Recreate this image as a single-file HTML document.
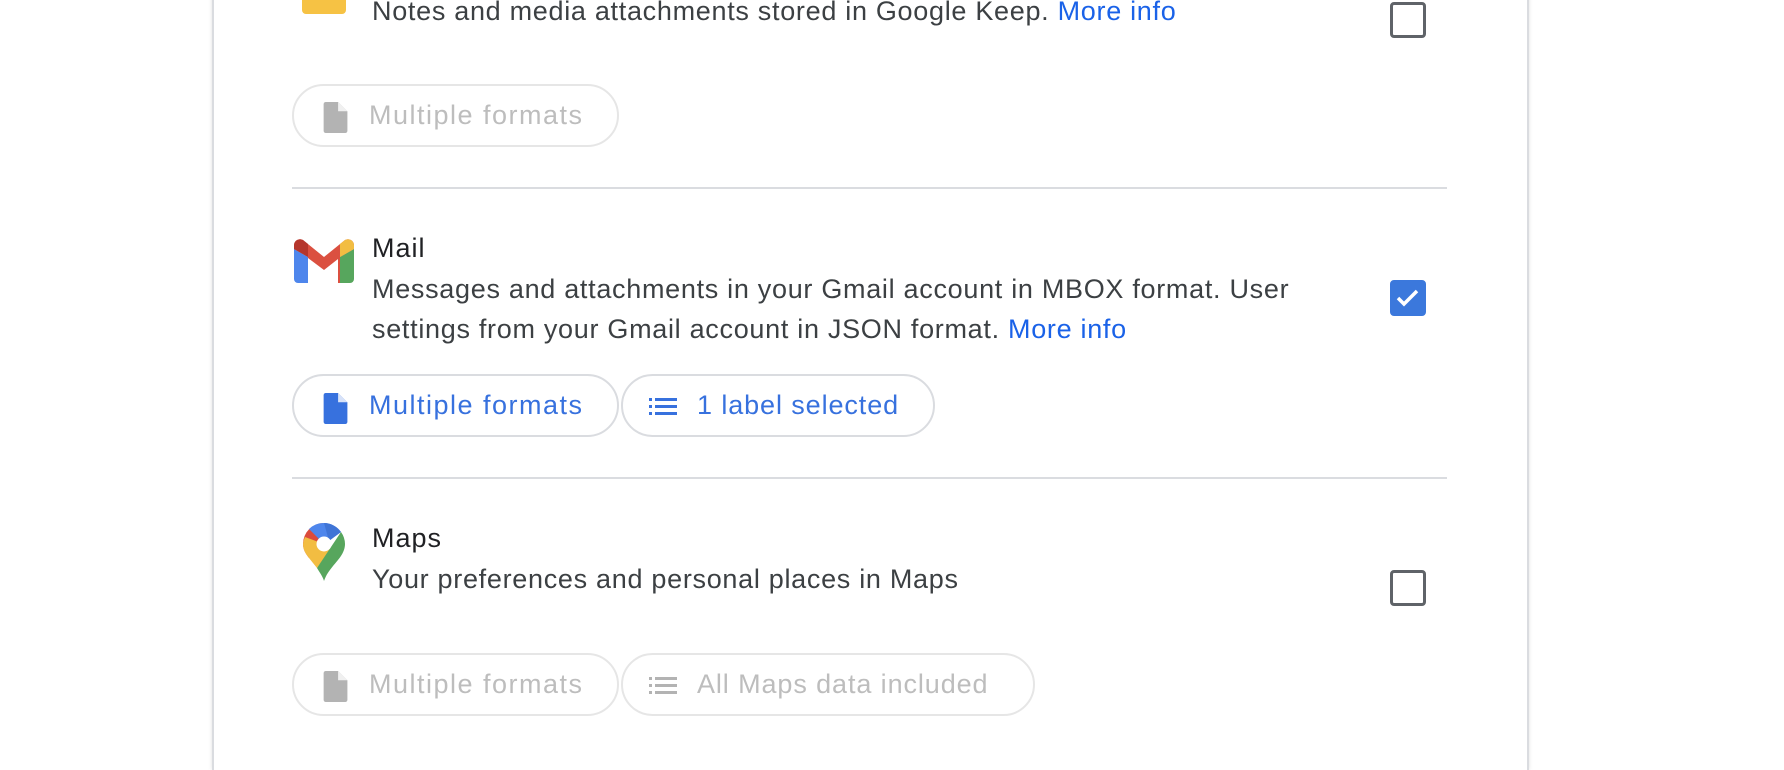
<!DOCTYPE html>
<html><head><meta charset="utf-8">
<style>
html,body{margin:0;padding:0;background:#fff;width:1784px;height:740px;overflow:hidden;font-family:"Liberation Sans",Arial,sans-serif;}
.card{position:absolute;left:212px;top:-10px;width:1313px;height:780px;border-left:2px solid #dadce0;border-right:2px solid #dadce0;box-shadow:0 0 4px rgba(0,0,0,.12);background:#fff;}
.abs{position:absolute;}
.t{position:absolute;left:372px;font-size:27px;line-height:40px;color:#3c4043;white-space:nowrap;letter-spacing:0.7px;}
.title{color:#202124;letter-spacing:1px;}
a{color:#1a62e8;text-decoration:none;}
.hr{position:absolute;left:292px;width:1155px;height:2px;background:#dadce0;}
.pill{position:absolute;height:59px;border:2px solid #dadce0;border-radius:32px;box-sizing:content-box;font-size:27px;line-height:59px;white-space:nowrap;letter-spacing:1.5px;}
.pill.on{color:#3771de;}
.pill.off{color:#bdbdbd;border-color:#e6e6e6;}
.pill span{position:absolute;top:0;}
.pill svg{position:absolute;}
.cb{position:absolute;left:1390px;width:30px;height:30px;border:3px solid #5f6368;border-radius:4px;}
.cb.chk{background:#3b78dc;border-color:#3b78dc;}
</style></head><body>
<div class="card"></div>

<!-- Keep -->
<div class="abs" style="left:302px;top:-6px;width:44px;height:20px;background:#f6c244;border-radius:4px;"></div>
<div class="t" style="top:-9px;">Notes and media attachments stored in Google Keep. <a>More info</a></div>
<div class="cb" style="top:2px;"></div>
<div class="pill off" style="left:292px;top:84px;width:323px;">
  <svg style="left:28px;top:16px" width="26" height="31" viewBox="0 0 24 30"><path d="M3 0h12l9 9v19a2 2 0 0 1-2 2H3a2 2 0 0 1-2-2V2a2 2 0 0 1 2-2z" fill="#b3b3b3"/><path d="M15 0v9h9z" fill="#fff" opacity=".8"/></svg>
  <span style="left:75px">Multiple formats</span>
</div>
<div class="hr" style="top:187px;"></div>

<!-- Mail -->
<svg class="abs" style="left:294px;top:239px" width="60" height="44" viewBox="0 0 60 44">
  <path d="M0 10v30a4 4 0 0 0 4 4h10V18z" fill="#4e86ec"/>
  <path d="M46 18v26h10a4 4 0 0 0 4-4V10z" fill="#57a65d"/>
  <path d="M0 10 L0 6 A6 6 0 0 1 9 1 L30 18 L51 1 A6 6 0 0 1 60 6 V10 L46 18 V44 H44 V20 L30 31 L14 19 V44 H14 V18 Z" fill="#db5040"/>
  <path d="M0 6A6 6 0 0 1 9 1L14 5V18L0 10z" fill="#b5362c"/>
  <path d="M46 5L51 1A6 6 0 0 1 60 6V10L46 18z" fill="#f2bd42"/>
</svg>
<div class="t title" style="top:228px;">Mail</div>
<div class="t" style="top:269px;">Messages and attachments in your Gmail account in MBOX format. User</div>
<div class="t" style="top:309px;">settings from your Gmail account in JSON format. <a>More info</a></div>
<div class="cb chk" style="top:280px;"><svg width="30" height="30" viewBox="0 0 30 30"><path d="M5 15l6 6 13-13" stroke="#fff" stroke-width="3.5" fill="none"/></svg></div>
<div class="pill on" style="left:292px;top:374px;width:323px;">
  <svg style="left:28px;top:17px" width="26" height="31" viewBox="0 0 24 30"><path d="M3 0h12l9 9v19a2 2 0 0 1-2 2H3a2 2 0 0 1-2-2V2a2 2 0 0 1 2-2z" fill="#3771de"/><path d="M15 0v9h9z" fill="#fff" opacity=".8"/></svg>
  <span style="left:75px">Multiple formats</span>
</div>
<div class="pill on" style="left:621px;top:374px;width:310px;">
  <svg style="left:26px;top:20px" width="28" height="20" viewBox="0 0 28 20"><g fill="#3771de"><rect x="0" y="2" width="3" height="3"/><rect x="0" y="9" width="3" height="3"/><rect x="0" y="16" width="3" height="3"/><rect x="6" y="2" width="22" height="3"/><rect x="6" y="9" width="22" height="3"/><rect x="6" y="16" width="22" height="3"/></g></svg>
  <span style="left:74px;letter-spacing:0.9px">1 label selected</span>
</div>
<div class="hr" style="top:477px;"></div>

<!-- Maps -->
<svg class="abs" style="left:303px;top:523px" width="42" height="58" viewBox="0 0 42 58">
  <path d="M21 0A21 21 0 0 0 0 21c0 6 3 10 6 14l15-14z" fill="#db4b3c"/>
  <path d="M6 6A21 21 0 0 1 21 0a21 21 0 0 1 17 9L21 21z" fill="#4e86ec"/>
  <path d="M21 0a21 21 0 0 1 17 9L26 18z" fill="#3f74d6"/>
  <path d="M0 21c0 6 3 10 6 14l8 10L28 27 21 21 2 14A21 21 0 0 0 0 21z" fill="#f2bd42"/>
  <path d="M38 9a21 21 0 0 1 4 12c0 9-7 16-12 22-4 5-7 9-9 15-1-4-4-8-7-13L38 9z" fill="#57a65d"/>
  <circle cx="21" cy="21" r="7.5" fill="#fff"/>
</svg>
<div class="t title" style="top:518px;">Maps</div>
<div class="t" style="top:559px;">Your preferences and personal places in Maps</div>
<div class="cb" style="top:570px;"></div>
<div class="pill off" style="left:292px;top:653px;width:323px;">
  <svg style="left:28px;top:16px" width="26" height="31" viewBox="0 0 24 30"><path d="M3 0h12l9 9v19a2 2 0 0 1-2 2H3a2 2 0 0 1-2-2V2a2 2 0 0 1 2-2z" fill="#b3b3b3"/><path d="M15 0v9h9z" fill="#fff" opacity=".8"/></svg>
  <span style="left:75px">Multiple formats</span>
</div>
<div class="pill off" style="left:621px;top:653px;width:410px;">
  <svg style="left:26px;top:20px" width="28" height="20" viewBox="0 0 28 20"><g fill="#b3b3b3"><rect x="0" y="2" width="3" height="3"/><rect x="0" y="9" width="3" height="3"/><rect x="0" y="16" width="3" height="3"/><rect x="6" y="2" width="22" height="3"/><rect x="6" y="9" width="22" height="3"/><rect x="6" y="16" width="22" height="3"/></g></svg>
  <span style="left:74px;letter-spacing:0.9px">All Maps data included</span>
</div>
</body></html>
